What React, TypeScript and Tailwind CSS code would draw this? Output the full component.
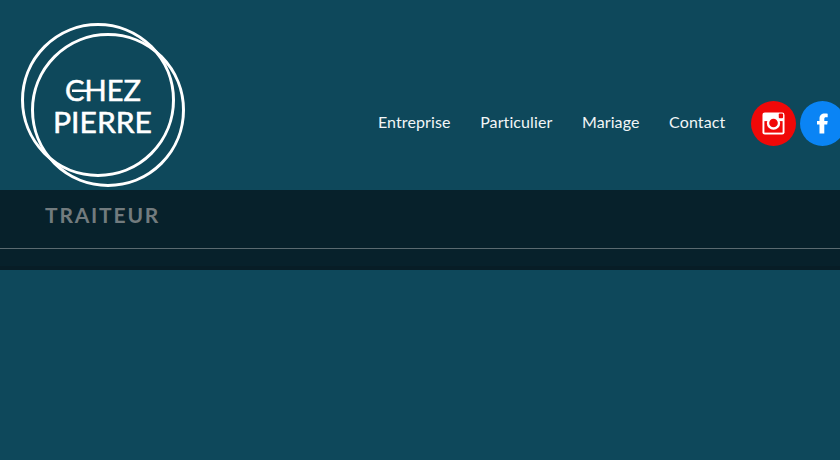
const navItems = ["Entreprise", "Particulier", "Mariage", "Contact"]

const Logo = () => (
    <svg width="170" height="170" viewBox="0 0 170 170" className="shrink-0">
        <circle cx="80" cy="79" r="75.500" fill="none" stroke="#fff" strokeWidth="3" />
        <circle cx="90" cy="89" r="75.500" fill="none" stroke="#fff" strokeWidth="3" />
        <text x="47" y="80" textLength="76" lengthAdjust="spacingAndGlyphs" fill="#fff" stroke="#fff" strokeWidth="0.5" fontFamily="Lato, sans-serif" fontSize="28">CHEZ</text>
        <rect x="54" y="68.500" width="16" height="2.500" fill="#fff" />
        <text x="35" y="112" textLength="99" lengthAdjust="spacingAndGlyphs" fill="#fff" stroke="#fff" strokeWidth="0.5" fontFamily="Lato, sans-serif" fontSize="28">PIERRE</text>
    </svg>
)

const App = () => {
    return (
        <div className="h-[460px] w-[840px] overflow-hidden bg-[#0e485b] font-['Lato',sans-serif]">
            <header className="flex h-[190px] items-start">
                <div className="pl-[18px] pt-[21px]">
                    <Logo />
                </div>
                <nav className="ml-[190px] mt-[111px] flex gap-[29.6px] text-[16px] leading-[22px] tracking-[0.1px] text-[#f2f6f7] [font-variant-ligatures:none]">
                    {navItems.map((item) => (
                        <a key={item} href="#">{item}</a>
                    ))}
                </nav>
                <div className="ml-[26px] mt-[101px] flex shrink-0 gap-[4px]">
                    <a href="#" className="flex h-[45px] w-[45px] items-center justify-center rounded-full bg-[#f00808]">
                        <svg width="23" height="23" viewBox="0 0 24 24">
                            <rect x="0.500" y="0.500" width="23" height="23" rx="2.500" fill="#fff" />
                            <rect x="2.500" y="9.500" width="19" height="12" fill="#f00808" />
                            <circle cx="12" cy="11.500" r="7" fill="#fff" />
                            <circle cx="12" cy="11.500" r="4.500" fill="#f00808" />
                            <rect x="17.500" y="1.500" width="4.500" height="5" rx="1" fill="#f00808" />
                        </svg>
                    </a>
                    <a href="#" className="flex h-[45px] w-[45px] shrink-0 items-center justify-center rounded-full bg-[#0a84f5]">
                        <svg width="11" height="21" viewBox="0 0 11 20">
                            <path d="M2.500 20V11H0V7.500h2.500V5C2.500 1.500 4.800 0 7.500 0c1.300 0 2.500.1 3.200.2v3.500H9c-1.300 0-1.700.6-1.700 1.800v2h3.400L10.200 11H7.300v9z" fill="#fff" />
                        </svg>
                    </a>
                </div>
            </header>
            <div className="h-[80px] bg-[#07212b]">
                <div className="h-[58px] pl-[45px] pt-[14px] text-[21px] font-bold leading-[22px] tracking-[1.8px] text-[#727b7e]">
                    TRAITEUR
                </div>
                <div className="h-px bg-[#5a6a70]"></div>
                <div className="mt-[17px] h-[4px] bg-[#071d26]"></div>
            </div>
        </div>
    )
}

export default App
